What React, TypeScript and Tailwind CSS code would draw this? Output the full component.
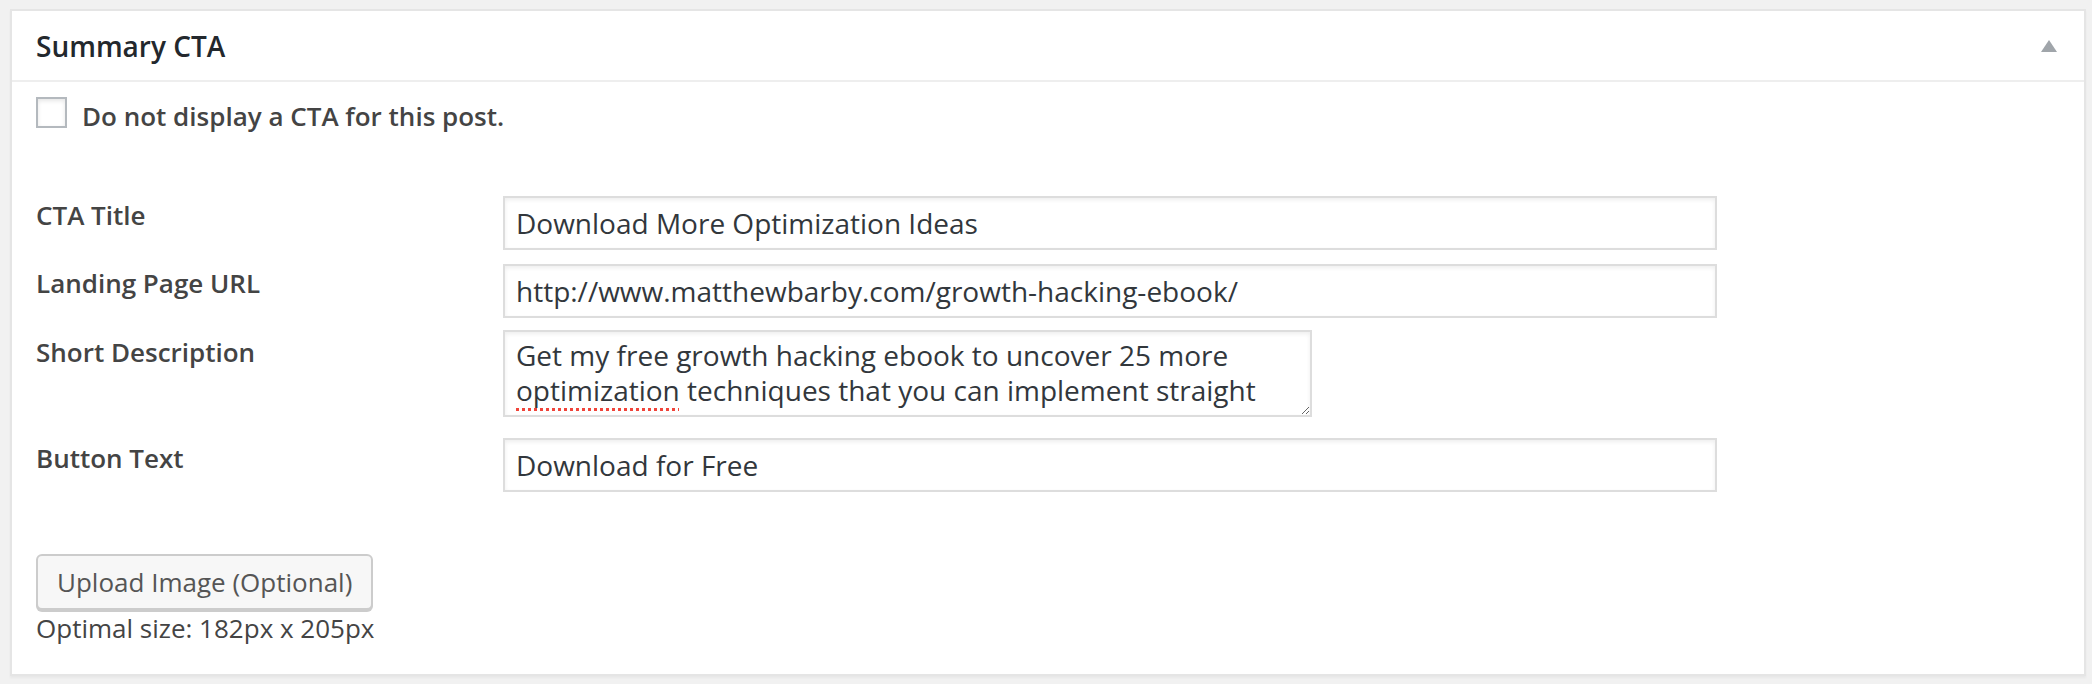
export default function App() {
  const rows = [
    { label: "CTA Title", value: "Download More Optimization Ideas", mt: "mt-0", pt: "pt-[1px]" },
    { label: "Landing Page URL", value: "http://www.matthewbarby.com/growth-hacking-ebook/", mt: "mt-[14px]", pt: "pt-[1px]" },
  ];

  return (
    <div className="min-h-[684px] bg-[#f1f1f1] pt-[9px] font-['Open_Sans',sans-serif]">
      <div className="ml-[10px] mr-[6px] border-2 border-[#e5e5e5] bg-white shadow-[0_2px_2px_rgba(0,0,0,0.04)]">
        {/* header */}
        <div className="flex h-[71px] items-center justify-between border-b-2 border-[#eeeeee] pl-[24px] pr-[27px]">
          <h2 className="text-[28px] font-semibold leading-[38px] text-[#23282d]">Summary CTA</h2>
          <svg width="16" height="12" viewBox="0 0 16 12" aria-hidden="true">
            <path d="M8 0L16 12H0Z" fill="#a0a5aa" />
          </svg>
        </div>

        <div className="pl-[24px] pt-[15px] pb-[28px] text-[#444444]">
          <label className="flex items-start">
            <input
              type="checkbox"
              className="h-[31px] w-[31px] shrink-0 appearance-none border-2 border-[#b4b9be] bg-white shadow-[inset_0_2px_4px_rgba(0,0,0,0.1)]"
            />
            <span className="ml-[15px] mt-[1px] text-[26px] font-semibold leading-[36px]">
              Do not display a CTA for this post.
            </span>
          </label>

          <div className="mt-[62px]">
            {rows.map((row) => (
              <div key={row.label} className={`flex items-start ${row.mt}`}>
                <div className={`w-[467px] shrink-0 text-[26px] font-semibold leading-[36px] ${row.pt}`}>{row.label}</div>
                <input
                  type="text"
                  readOnly
                  defaultValue={row.value}
                  className="h-[54px] w-[1214px] border-2 border-[#dddddd] bg-white px-[11px] text-[28px] text-[#32373c] shadow-[inset_0_2px_4px_rgba(0,0,0,0.07)] outline-none"
                />
              </div>
            ))}

            <div className="mt-[12px] flex items-start">
              <div className="w-[467px] shrink-0 pt-[4px] text-[26px] font-semibold leading-[36px]">Short Description</div>
              <div
                role="textbox"
                className="h-[87px] w-[809px] resize overflow-hidden border-2 border-[#dddddd] bg-white px-[11px] pt-[6px] text-[28px] leading-[35px] text-[#32373c] shadow-[inset_0_2px_4px_rgba(0,0,0,0.07)]"
              >
                Get my free growth hacking ebook to uncover 25 more{" "}
                <span className="underline decoration-[#f0443a] decoration-dotted decoration-[3px] underline-offset-[7px]">
                  optimization
                </span>{" "}
                techniques that you can implement straight away on your own website.
              </div>
            </div>

            <div className="mt-[21px] flex items-start">
              <div className="w-[467px] shrink-0 pt-[2px] text-[26px] font-semibold leading-[36px]">Button Text</div>
              <input
                type="text"
                readOnly
                defaultValue="Download for Free"
                className="h-[54px] w-[1214px] border-2 border-[#dddddd] bg-white px-[11px] text-[28px] text-[#32373c] shadow-[inset_0_2px_4px_rgba(0,0,0,0.07)] outline-none"
              />
            </div>
          </div>

          <button
            type="button"
            className="mt-[62px] h-[56px] rounded-[6px] border-2 border-[#cccccc] bg-[#f7f7f7] px-[19px] text-[26px] leading-[36px] text-[#555555] shadow-[0_2px_0_#cccccc]"
          >
            Upload Image (Optional)
          </button>
          <p className="text-[26px] leading-[36px] text-[#444444]">Optimal size: 182px x 205px</p>
        </div>
      </div>
    </div>
  );
}
